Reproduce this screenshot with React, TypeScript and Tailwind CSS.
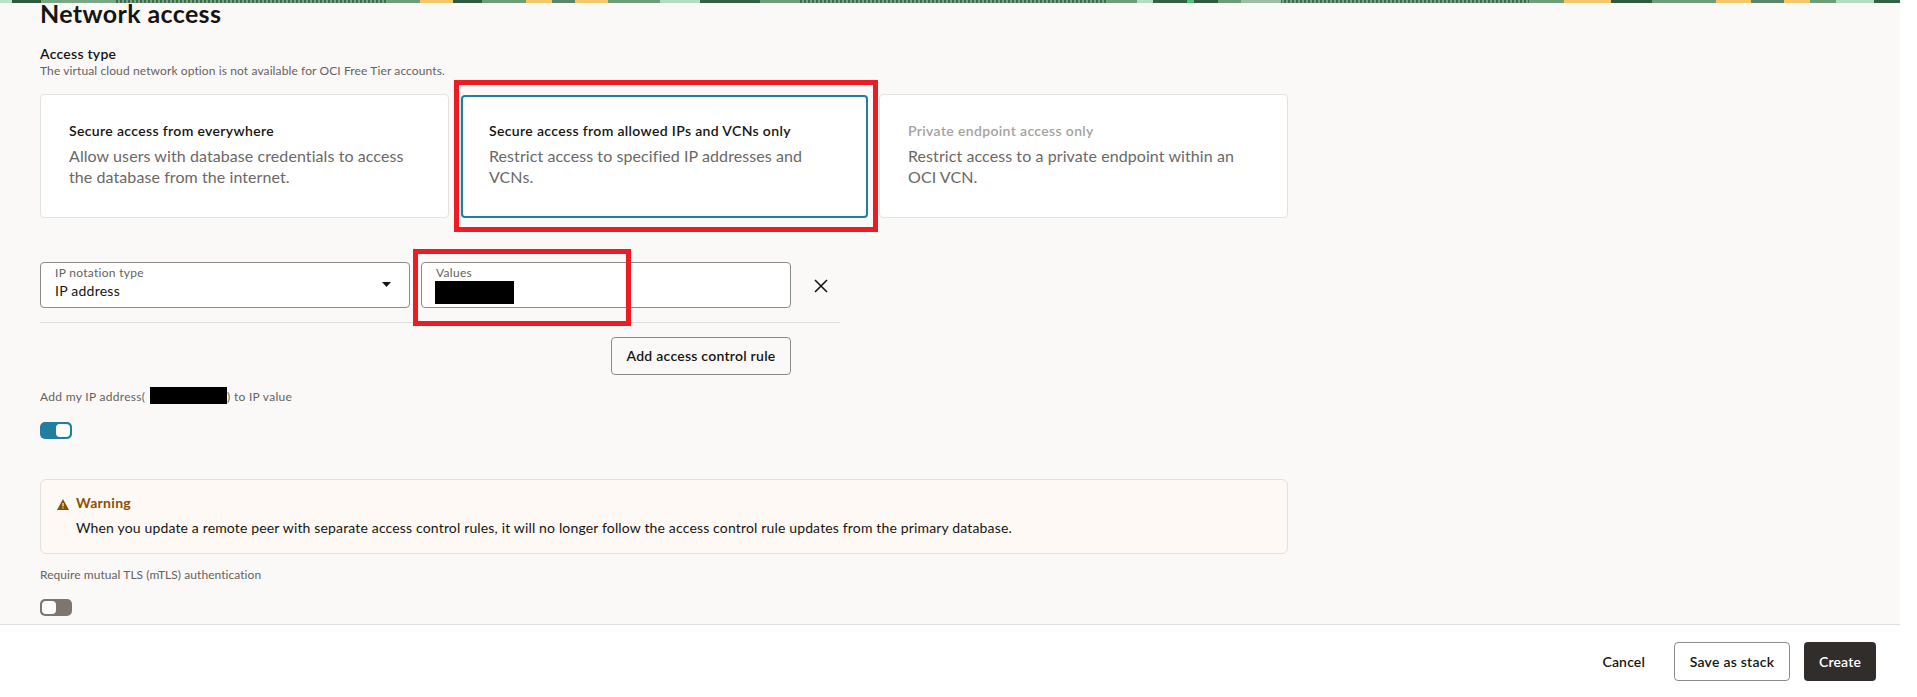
const FONT = "font-['Lato','Liberation_Sans',sans-serif]";

const bands: [number, number, string][] = [
  [0, 12, '#c0e0c8'], [12, 41, '#2f5a40'], [41, 114, '#7ba884'], [114, 196, 'url(#stripe)'], [196, 388, 'url(#stripe)'],
  [388, 420, '#6e9e78'], [420, 453, '#f2c868'], [453, 482, '#2f5a40'], [482, 526, '#6e9e78'], [526, 552, '#f2c868'],
  [552, 575, '#5a8566'], [575, 608, '#f2c868'], [608, 660, '#6e9e78'], [660, 700, '#b5dcc0'], [700, 760, '#356044'],
  [760, 800, '#6e9e78'], [800, 1000, 'url(#stripe)'], [1000, 1108, 'url(#stripe)'], [1108, 1137, '#6e9e78'], [1137, 1153, '#b5dcc0'],
  [1153, 1187, '#356044'], [1187, 1194, '#4fc070'], [1194, 1218, '#2f5a40'], [1218, 1241, '#6b9c76'], [1241, 1281, '#a0bca4'],
  [1281, 1529, 'url(#stripe)'], [1529, 1564, '#6e9e78'], [1564, 1611, '#f2c868'], [1611, 1652, '#2f5a40'], [1652, 1716, '#6e9e78'],
  [1716, 1751, '#f2c868'], [1751, 1784, '#5a8566'], [1784, 1810, '#f2c868'], [1810, 1836, '#6e9e78'], [1836, 1874, '#b5dcc0'],
  [1874, 1900, '#356044'],
];

function Banner() {
  return (
    <svg width="1900" height="3" className="relative z-10 block shrink-0">
      <defs>
        <pattern id="stripe" width="4" height="3" patternUnits="userSpaceOnUse">
          <rect width="4" height="3" fill="#3d6b4c" />
          <rect x="2" width="2" height="3" fill="#7da085" />
        </pattern>
      </defs>
      {bands.map(([a, b, c]) => (
        <rect key={a} x={a} y="0" width={b - a} height="3" fill={c} />
      ))}
    </svg>
  );
}

function Card({ title, desc, cls, titleCls, children }: { title: string; desc: string[]; cls: string; titleCls: string; children?: React.ReactNode }) {
  return (
    <div className={`relative rounded bg-white ${cls}`}>
      <div className={`text-[14px] leading-[20px] font-semibold tracking-[0.35px] ${titleCls}`}>{title}</div>
      <div className="mt-[4px] text-[16px] leading-[21px] tracking-[0.08px] text-[#6b6866]">
        {desc.map((d) => (
          <div key={d}>{d}</div>
        ))}
      </div>
      {children}
    </div>
  );
}

function Toggle({ on }: { on: boolean }) {
  return (
    <div className={`flex h-[17px] w-[32px] items-center rounded-[5px] px-[2px] ${on ? 'justify-end bg-[#227e9e]' : 'justify-start bg-[#7d7670]'}`}>
      <div className="h-[13px] w-[14px] rounded-[4px] bg-white" />
    </div>
  );
}

export default function App() {
  return (
    <div className={`h-[697px] w-[1917px] overflow-hidden bg-white ${FONT}`}>
      <div className="flex h-[697px] w-[1900px] flex-col">
        <Banner />
        <div className="h-[621px] shrink-0 bg-[#fbf9f8] pl-[40px]">
          <h1 className="text-[25px] leading-[20px] font-bold tracking-[0.38px] text-[#161513]">Network access</h1>
          <div className="mt-[22px] text-[14px] leading-[18px] font-semibold tracking-[0.25px] text-[#161513]">Access type</div>
          <div className="text-[12px] leading-[15px] tracking-[0.11px] text-[#65625f]">The virtual cloud network option is not available for OCI Free Tier accounts.</div>

          <div className="mt-[16px] flex items-start">
            <Card
              title="Secure access from everywhere"
              desc={['Allow users with database credentials to access', 'the database from the internet.']}
              cls="h-[124px] w-[409px] border border-[#e4e1dd] pt-[26px] pl-[28px]"
              titleCls="text-[#161513]"
            />
            <Card
              title="Secure access from allowed IPs and VCNs only"
              desc={['Restrict access to specified IP addresses and', 'VCNs.']}
              cls="mt-[1px] ml-[12px] h-[123px] w-[407px] border-2 border-[#227e9e] pt-[24px] pl-[26px]"
              titleCls="text-[#161513]"
            >
              <div className="pointer-events-none absolute -top-[17px] -right-[12px] -bottom-[16px] -left-[9px] border-[5px] border-[#ed1c24]" />
            </Card>
            <Card
              title="Private endpoint access only"
              desc={['Restrict access to a private endpoint within an', 'OCI VCN.']}
              cls="ml-[11px] h-[124px] w-[409px] border border-[#e4e1dd] pt-[26px] pl-[28px]"
              titleCls="text-[#a5a3a1]"
            />
          </div>

          <div className="mt-[44px] flex w-[800px] items-start border-b border-[#e0dedc] pb-[14px]">
            <div className="relative h-[46px] w-[370px] rounded border border-[#8d8a87] bg-white pt-[3px] pl-[14px]">
              <div className="text-[12px] leading-[14px] tracking-[0.3px] text-[#65625f]">IP notation type</div>
              <div className="mt-[1px] text-[14px] leading-[19px] tracking-[0.25px] text-[#161513]">IP address</div>
              <svg width="9" height="5" viewBox="0 0 9 5" className="absolute top-[19px] right-[18px]">
                <path d="M0 0H9L4.5 5Z" fill="#161513" />
              </svg>
            </div>
            <div className="relative ml-[11px] h-[46px] w-[370px] rounded border border-[#8d8a87] bg-white pt-[3px] pl-[14px]">
              <div className="text-[12px] leading-[14px] tracking-[0.3px] text-[#65625f]">Values</div>
              <div className="mt-[1px] -ml-px h-[23px] w-[79px] bg-black" />
              <div className="pointer-events-none absolute -top-[14px] -bottom-[19px] -left-[9px] w-[218px] border-[5px] border-[#ed1c24]" />
            </div>
            <svg width="14" height="14" viewBox="0 0 14 14" className="mt-[17px] ml-[23px]">
              <path d="M1 1L13 13M13 1L1 13" stroke="#161513" strokeWidth="1.6" fill="none" />
            </svg>
          </div>

          <div className="mt-[14px] flex w-[751px] justify-end">
            <button className="h-[38px] w-[180px] rounded border border-[#8d8a87] pb-[2px] text-[14px] font-semibold tracking-[0.25px] text-[#161513]">Add access control rule</button>
          </div>

          <div className="mt-[12px] flex h-[17px] items-center text-[12px] leading-[15px] tracking-[0.3px] text-[#65625f]">
            <span className="w-[110px] pt-[2px]">Add my IP address(</span>
            <span className="h-[17px] w-[77px] bg-black" />
            <span className="pt-[2px]">) to IP value</span>
          </div>
          <div className="mt-[18px]">
            <Toggle on />
          </div>

          <div className="mt-[40px] h-[75px] w-[1248px] rounded-[6px] border border-[#e4e1dd] bg-[#fef9f4] pt-[13px] pl-[16px]">
            <div className="flex items-center">
              <svg width="12" height="11" viewBox="0 0 12 11" className="mt-[3px] shrink-0">
                <path fillRule="evenodd" d="M6 0L12 11H0ZM5.4 4V7.6H6.6V4ZM5.4 8.4V9.6H6.6V8.4Z" fill="#8c4f00" />
              </svg>
              <span className="ml-[7px] text-[14px] leading-[20px] font-bold tracking-[0.3px] text-[#8c4f00]">Warning</span>
            </div>
            <div className="mt-[5px] pl-[19px] text-[14px] leading-[20px] tracking-[0.155px] text-[#161513]">
              When you update a remote peer with separate access control rules, it will no longer follow the access control rule updates from the primary database.
            </div>
          </div>

          <div className="mt-[13px] text-[12px] leading-[15px] tracking-[0.06px] text-[#65625f]">Require mutual TLS (mTLS) authentication</div>
          <div className="mt-[17px]">
            <Toggle on={false} />
          </div>
        </div>

        <div className="flex flex-1 items-start border-t border-[#e0dedc] bg-white pt-[17px] pr-[24px] text-[14px] font-semibold tracking-[0.15px]">
          <div className="flex w-full items-center justify-end">
            <span className="text-[#161513]">Cancel</span>
            <button className="ml-[29px] h-[39px] w-[116px] rounded border border-[#8d8a87] bg-white tracking-[0.25px] text-[#161513]">Save as stack</button>
            <button className="ml-[14px] h-[39px] w-[72px] rounded bg-[#312d2a] text-white">Create</button>
          </div>
        </div>
      </div>
    </div>
  );
}
